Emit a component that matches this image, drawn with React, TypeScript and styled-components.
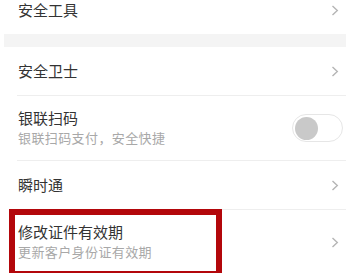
import React, { useState } from 'react';
import styled, { createGlobalStyle } from 'styled-components';

const GlobalStyle = createGlobalStyle`
  html, body {
    margin: 0;
    padding: 0;
    background: #ffffff;
  }

  body {
    font-family: "Noto Sans CJK SC", "Noto Sans", sans-serif;
    overflow: hidden;
  }
`;

const Page = styled.div`
  display: flex;
  flex-direction: column;
  margin-top: -14px;
  width: 346px;
`;

const Group = styled.div`
  background: #ffffff;
  display: flex;
  flex-direction: column;
`;

const GroupGap = styled.div`
  background: #f4f4f4;
  height: 13px;
  margin-left: 4px;
`;

const Row = styled.div<{ $tall?: boolean }>`
  align-items: center;
  display: flex;
  height: ${({ $tall }) => ($tall ? '64px' : '48px')};
  padding: 0 4px 0 18px;
  position: relative;
`;

const Divider = styled.div`
  background: #eeeeee;
  height: 1px;
  margin-left: 17px;
`;

const Texts = styled.div`
  display: flex;
  flex: 1;
  flex-direction: column;
  gap: 0;
`;

const Title = styled.span`
  color: #333333;
  font-size: 15px;
  line-height: 20px;
`;

const Subtitle = styled.span`
  color: #a8a8a8;
  font-size: 13px;
  letter-spacing: 0.4px;
  line-height: 20px;
`;

const Chevron = styled.svg`
  flex: none;
  height: 11px;
  margin-right: 3px;
  width: 8px;
`;

const Track = styled.button<{ $on: boolean }>`
  align-items: center;
  background: ${({ $on }) => ($on ? '#4cd964' : '#ffffff')};
  border: 1px solid #e6e6e6;
  border-radius: 14px;
  cursor: pointer;
  display: flex;
  height: 28px;
  justify-content: ${({ $on }) => ($on ? 'flex-end' : 'flex-start')};
  margin-right: -1px;
  padding: 0 2px;
  width: 51px;
`;

const Knob = styled.span<{ $on: boolean }>`
  background: ${({ $on }) => ($on ? '#ffffff' : '#c9c9c9')};
  border-radius: 50%;
  display: block;
  height: 23px;
  width: 23px;
`;

const Highlight = styled.div`
  border: 6px solid #b3070b;
  height: 56px;
  left: 9px;
  pointer-events: none;
  position: absolute;
  top: -1px;
  width: 201px;
`;

const ArrowRight = () => (
  <Chevron viewBox="0 0 8 11">
    <path d="M1.5 1 L6.3 5.5 L1.5 10" fill="none" stroke="#b5b5b5" strokeWidth="1.4" />
  </Chevron>
);

const App = () => {
    const [unionPay, setUnionPay] = useState<boolean>(false);

    return (
        <>
            <GlobalStyle />
            <Page>
                <Group>
                    <Row>
                        <Texts><Title>安全工具</Title></Texts>
                        <ArrowRight />
                    </Row>
                </Group>
                <GroupGap />
                <Group>
                    <Row>
                        <Texts><Title>安全卫士</Title></Texts>
                        <ArrowRight />
                    </Row>
                    <Divider />
                    <Row $tall>
                        <Texts>
                            <Title>银联扫码</Title>
                            <Subtitle>银联扫码支付，安全快捷</Subtitle>
                        </Texts>
                        <Track $on={unionPay} onClick={() => setUnionPay(!unionPay)}>
                            <Knob $on={unionPay} />
                        </Track>
                    </Row>
                    <Divider />
                    <Row>
                        <Texts><Title>瞬时通</Title></Texts>
                        <ArrowRight />
                    </Row>
                    <Divider />
                    <Row $tall>
                        <Texts>
                            <Title>修改证件有效期</Title>
                            <Subtitle>更新客户身份证有效期</Subtitle>
                        </Texts>
                        <ArrowRight />
                        <Highlight />
                    </Row>
                </Group>
            </Page>
        </>
    );
};

export default App;
